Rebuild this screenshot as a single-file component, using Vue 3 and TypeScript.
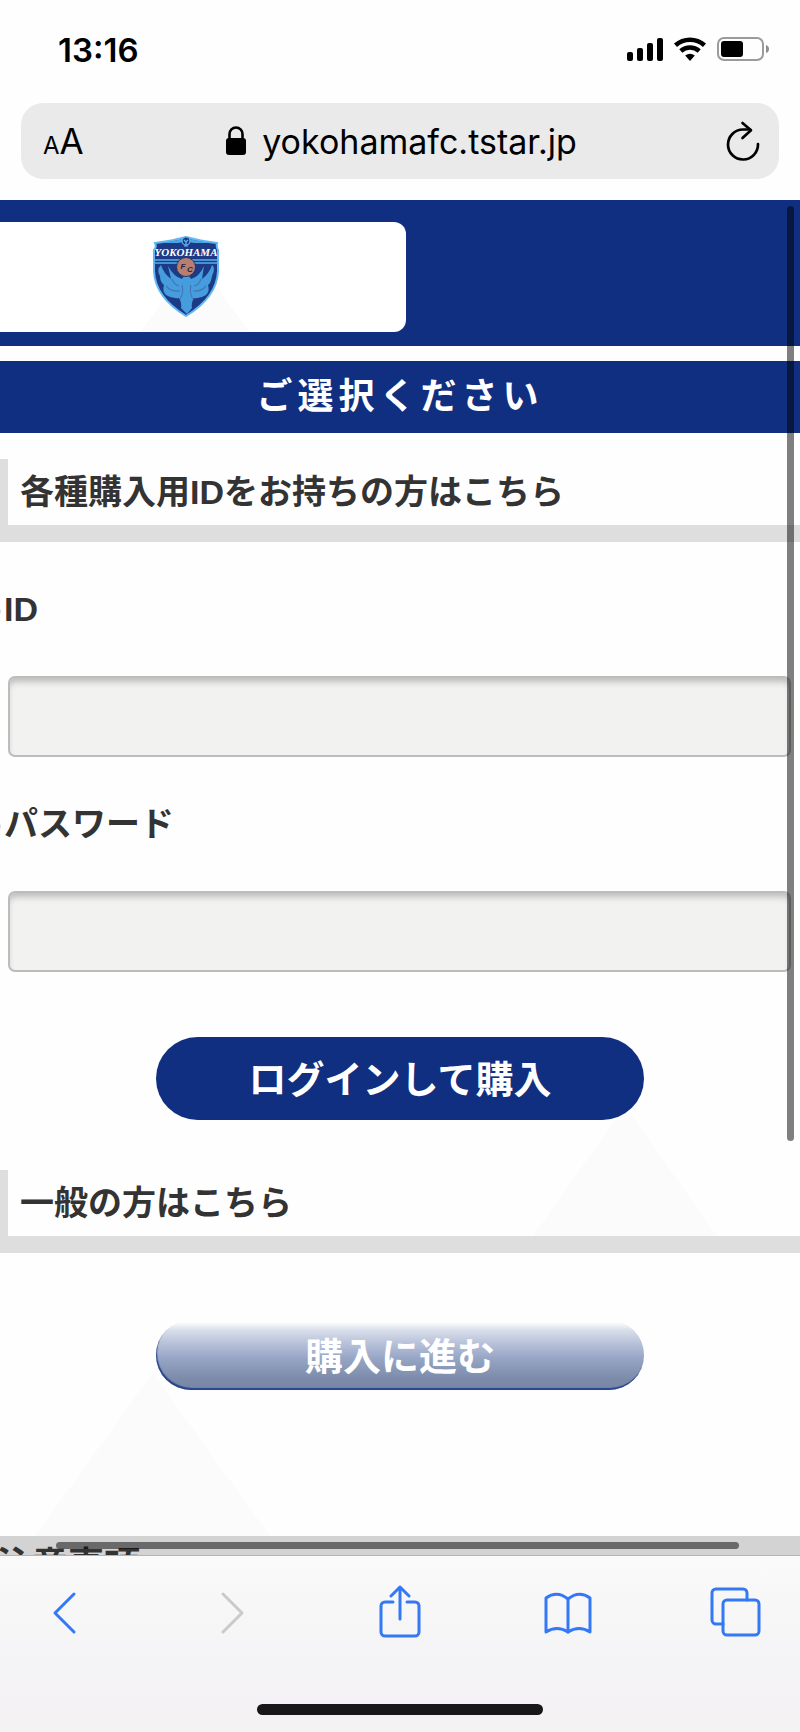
<script setup lang="ts">
import { ref } from 'vue'

interface Field {
  id: string
  label: string
  type: string
}

const fields: Field[] = [
  { id: 'member-id', label: 'ID', type: 'text' },
  { id: 'member-password', label: 'パスワード', type: 'password' },
]

const values = ref<Record<string, string>>({ 'member-id': '', 'member-password': '' })
</script>

<template>
  <div class="phone">
    <header class="chrome">
      <div class="status">
        <time class="clock">13:16</time>
        <svg class="status-icons" width="144" height="26" viewBox="0 0 144 26" aria-hidden="true">
          <rect x="1" y="15" width="6" height="9" rx="2" />
          <rect x="11" y="11" width="6" height="13" rx="2" />
          <rect x="21" y="6" width="6" height="18" rx="2" />
          <rect x="31" y="1" width="6" height="23" rx="2" />
          <g fill="none" stroke="#000" stroke-width="4.6">
            <path d="M49.500 8.200A22 22 0 0 1 78.500 8.200" />
            <path d="M54.800 14A14 14 0 0 1 73.200 14" />
          </g>
          <path d="M59.200 18.500Q64 14.800 68.800 18.500L64 24Z" />
          <rect x="92" y="1" width="45" height="22" rx="6" fill="none" stroke="#9b9b9b" stroke-width="2" />
          <rect x="95" y="4" width="22" height="16" rx="3" />
          <path d="M140 8Q143 9 143 12T140 16Z" fill="#8e8e8e" />
        </svg>
      </div>
      <div class="address">
        <button class="reader" type="button" aria-label="表示設定">
          <span class="small-a">A</span><span class="big-a">A</span>
        </button>
        <button class="site" type="button">
          <svg width="20" height="30" viewBox="0 0 20 30" aria-hidden="true">
            <rect x="0" y="12" width="20" height="17" rx="3" />
            <path d="M3.500 13V8a6.500 6.500 0 0 1 13 0V13" fill="none" stroke="#000" stroke-width="2.600" />
          </svg>
          <span>yokohamafc.tstar.jp</span>
        </button>
        <button class="reload" type="button" aria-label="再読み込み">
          <svg width="34" height="40" viewBox="0 0 34 40" fill="none" stroke="#000" stroke-width="2.700" stroke-linecap="round" stroke-linejoin="round" aria-hidden="true">
            <path d="M32 23A15 15 0 1 1 17 8.500H24" />
            <path d="M16.500 2 25 9.200 16.500 17" />
          </svg>
        </button>
      </div>
    </header>

    <main class="page">
      <div class="brand">
        <a class="brand-card" href="#top" aria-label="YOKOHAMA FC">
          <svg class="crest" width="68" height="84" viewBox="0 0 68 84" aria-hidden="true">
            <path d="M3 8Q20 6 34 2Q48 6 65 8Q64 12 66 15V36Q65 62 34 81Q3 62 2 36V15Q5 12 3 8Z" fill="#1c3a86" stroke="#62b8f2" stroke-width="2" />
            <path d="M7 8Q24 6 34 3Q44 6 61 8L42 8Q34 6 26 8Z" fill="#4ba3e2" />
            <circle cx="34" cy="6" r="4" fill="#1c3a86" stroke="#62b8f2" stroke-width="1.200" />
            <path d="M32 5l2 2 2-2M34 7v4M32 11h4" fill="none" stroke="#62b8f2" stroke-width="1.200" />
            <path d="M2 25H66M2 28H66" stroke="#5aaeea" stroke-width="1.500" />
            <path d="M9 30Q12 39 19 44L16 31Q22 42 30 44L32 41L37 41L39 44Q47 42 52 31L50 44Q57 39 60 30Q64 33 60 41Q59 48 56 50Q58 56 54 60Q48 64 42 63Q39 68 40 73L35 79L29 73Q30 68 27 63Q20 64 14 60Q10 56 12 50Q8 47 8 41Q4 35 9 30Z" fill="#459ddd" />
            <path d="M14 51Q19 57 28 56M54 51Q49 57 41 56M28 64Q32 58 30 50M41 64Q37 58 39 50M20 44Q22 50 27 51M49 44Q47 50 42 51" fill="none" stroke="#4377b8" stroke-width="1.200" />
            <circle cx="34" cy="32" r="9.500" fill="#b87f70" stroke="#263765" stroke-width="1" />
            <text x="34" y="21" class="crest-name">YOKOHAMA</text>
            <text x="31" y="34" class="crest-fc">F</text>
            <text x="38" y="37" class="crest-fc">C</text>
          </svg>
        </a>
      </div>

      <h1>ご選択ください</h1>

      <form class="login" @submit.prevent>
        <h2>各種購入用IDをお持ちの方はこちら</h2>
        <div v-for="field in fields" :key="field.id" class="field">
          <label :for="field.id">{{ field.label }}</label>
          <input :id="field.id" v-model="values[field.id]" :type="field.type" />
        </div>
        <button class="pill login-button" type="submit">ログインして購入</button>
      </form>

      <section class="general">
        <h2>一般の方はこちら</h2>
        <button class="pill proceed-button" type="button">購入に進む</button>
      </section>

      <h3>注意事項</h3>

      <span class="scroll-y"></span>
      <span class="scroll-x"></span>
    </main>

    <footer class="toolbar">
      <nav aria-label="ブラウザ">
        <button type="button" aria-label="戻る">
          <svg width="52" height="56" viewBox="0 0 52 56"><path d="M35 9 16 28 35 47" /></svg>
        </button>
        <button class="off" type="button" aria-label="進む" disabled>
          <svg width="52" height="56" viewBox="0 0 52 56"><path d="M16 9 35 28 16 47" /></svg>
        </button>
        <button type="button" aria-label="共有">
          <svg width="52" height="56" viewBox="0 0 52 56">
            <path d="M18 17H10a4 4 0 0 0-4 4V47a4 4 0 0 0 4 4H40a4 4 0 0 0 4-4V21a4 4 0 0 0-4-4H32" />
            <path d="M25 34V2M16 11 25 2 34 11" />
          </svg>
        </button>
        <button type="button" aria-label="ブックマーク">
          <svg width="52" height="56" viewBox="0 0 52 56">
            <path d="M26 14Q15 5 4 13V47Q15 40 26 47Q37 40 48 47V13Q37 5 26 14Z" />
            <path d="M26 14V47" />
          </svg>
        </button>
        <button type="button" aria-label="タブ">
          <svg width="52" height="56" viewBox="0 0 52 56">
            <rect x="13" y="15" width="36" height="35" rx="4" />
            <path d="M13 39H6a4 4 0 0 1-4-4V8a4 4 0 0 1 4-4H33a4 4 0 0 1 4 4V15" />
          </svg>
        </button>
      </nav>
      <span class="home-bar"></span>
    </footer>
  </div>
</template>

<style>
body {
  margin: 0;
}
</style>

<style scoped>
* {
  box-sizing: border-box;
}

.phone {
  display: flex;
  flex-direction: column;
  height: 100vh;
  overflow: hidden;
  background: #fefefe;
  color: #333;
  font-family: "Liberation Sans", "Noto Sans CJK JP", sans-serif;
}

button {
  padding: 0;
  border: 0;
  background: none;
  color: inherit;
  font: inherit;
}

svg {
  display: block;
}

/* Status bar and address bar */
.chrome {
  flex: none;
  padding-bottom: 21px;
  color: #000;
  font-family: Inter, sans-serif;
}

.status {
  display: flex;
  align-items: center;
  justify-content: space-between;
  height: 103px;
  padding: 0 30px 4px 58px;
}

.clock {
  font-size: 33px;
  font-weight: 600;
}

.address {
  display: flex;
  align-items: center;
  justify-content: space-between;
  height: 76px;
  margin: 0 21px;
  padding: 0 19px 0 22px;
  border-radius: 22px;
  background: #eaeaea;
}

.reader {
  display: flex;
  align-items: baseline;
  width: 40px;
}

.small-a {
  font-size: 24px;
}

.big-a {
  font-size: 35px;
}

.site {
  display: flex;
  align-items: center;
  gap: 16px;
  font-size: 34px;
}

.reload {
  display: flex;
  justify-content: flex-end;
  width: 40px;
}

/* Web page */
.page {
  position: relative;
  flex: 1;
  min-height: 0;
  overflow: hidden;
}

.brand {
  padding: 22px 0 14px;
  background: #102f80;
}

.brand-card {
  position: relative;
  display: flex;
  align-items: center;
  justify-content: center;
  width: 406px;
  max-width: 100%;
  height: 110px;
  padding-right: 34px;
  border-radius: 0 12px 12px 0;
  background: #fff;
}

.brand-card::before,
.login::after,
.general::after {
  position: absolute;
  z-index: 0;
  background: #fbfbfb;
  clip-path: polygon(50% 0, 100% 100%, 0 100%);
  content: "";
}

.brand-card::before {
  bottom: 0;
  left: 140px;
  width: 110px;
  height: 72px;
}

.crest {
  position: relative;
}

.crest-name {
  fill: #fff;
  font-family: "Liberation Serif", serif;
  font-size: 11px;
  font-style: italic;
  font-weight: 700;
  text-anchor: middle;
}

.crest-fc {
  fill: #1c2545;
  font-size: 8px;
  font-style: italic;
  font-weight: 700;
  text-anchor: middle;
}

h1 {
  height: 72px;
  margin: 15px 0 26px;
  background: #102f80;
  color: #fff;
  font-size: 36px;
  letter-spacing: 5px;
  line-height: 72px;
  text-align: center;
}

h2 {
  position: relative;
  z-index: 1;
  margin: 0;
  padding-left: 12px;
  border-bottom: 17px solid #dedede;
  border-left: 8px solid #dedede;
  font-size: 34px;
  line-height: 66px;
}

.field {
  display: flex;
  flex-direction: column;
  gap: 42px;
  padding: 42px 9px 0 8px;
}

label {
  position: relative;
  margin-left: -4px;
  font-size: 34px;
  font-weight: 700;
  line-height: 50px;
}

/* List bullet, mostly scrolled off the left edge */
label::before {
  position: absolute;
  top: 23px;
  left: -12px;
  width: 9px;
  height: 9px;
  border-radius: 50%;
  background: #ddd;
  content: "";
}

input {
  width: 100%;
  height: 81px;
  padding: 0 16px;
  border: 2px solid #bcbcbc;
  border-radius: 7px;
  outline: 0;
  background: #f2f2f1;
  box-shadow: inset 0 6px 6px -2px #bdbdbd;
  font-size: 34px;
}

.pill {
  position: relative;
  z-index: 1;
  display: block;
  width: 61%;
  margin: 0 auto;
  padding-bottom: 4px;
  border-radius: 42px;
  background: #102f80;
  color: #fff;
  font-size: 38px;
  font-weight: 700;
}

.login {
  position: relative;
}

.login-button {
  height: 83px;
  margin-top: 65px;
  margin-bottom: 50px;
}

.login::after {
  right: 83px;
  bottom: -116px;
  width: 184px;
  height: 130px;
}

.general {
  position: relative;
  padding-bottom: 146px;
}

.general::after {
  bottom: 0;
  left: 35px;
  width: 235px;
  height: 163px;
}

.proceed-button {
  height: 70px;
  margin-top: 67px;
  background: linear-gradient(#fefefe 3%, #dadfeb 14%, #bdc6dc 30%, #98a6c6 54%, #7d8baa 84%, #7886a6);
  box-shadow: inset 1px -2px 1px #27458d;
}

h3 {
  margin: 0 0 0 -4px;
  background: #d3d3d3;
  font-size: 36px;
  line-height: 60px;
}

.scroll-y,
.scroll-x {
  position: absolute;
  z-index: 2;
  border-radius: 4px;
  background: rgba(0, 0, 0, 0.5);
}

.scroll-y {
  top: 6px;
  right: 6px;
  width: 7px;
  height: 69%;
}

.scroll-x {
  right: 61px;
  bottom: 6px;
  left: 56px;
  height: 7px;
}

/* Bottom toolbar */
.toolbar {
  display: flex;
  flex: none;
  flex-direction: column;
  align-items: center;
  justify-content: space-between;
  padding: 29px 0 17px;
  border-top: 1px solid #b5b5b5;
  background: linear-gradient(#fafafa, #f4f3f5 65%, #f4f2f3);
}

nav {
  display: flex;
  justify-content: space-between;
  width: 100%;
  margin-bottom: 63px;
  padding: 0 38px 0 39px;
  color: #3478f6;
}

nav svg {
  fill: none;
  stroke: currentColor;
  stroke-linecap: round;
  stroke-linejoin: round;
  stroke-width: 3px;
}

.off {
  color: #cacaca;
}

.home-bar {
  width: 286px;
  height: 11px;
  border-radius: 6px;
  background: #181818;
}
</style>
